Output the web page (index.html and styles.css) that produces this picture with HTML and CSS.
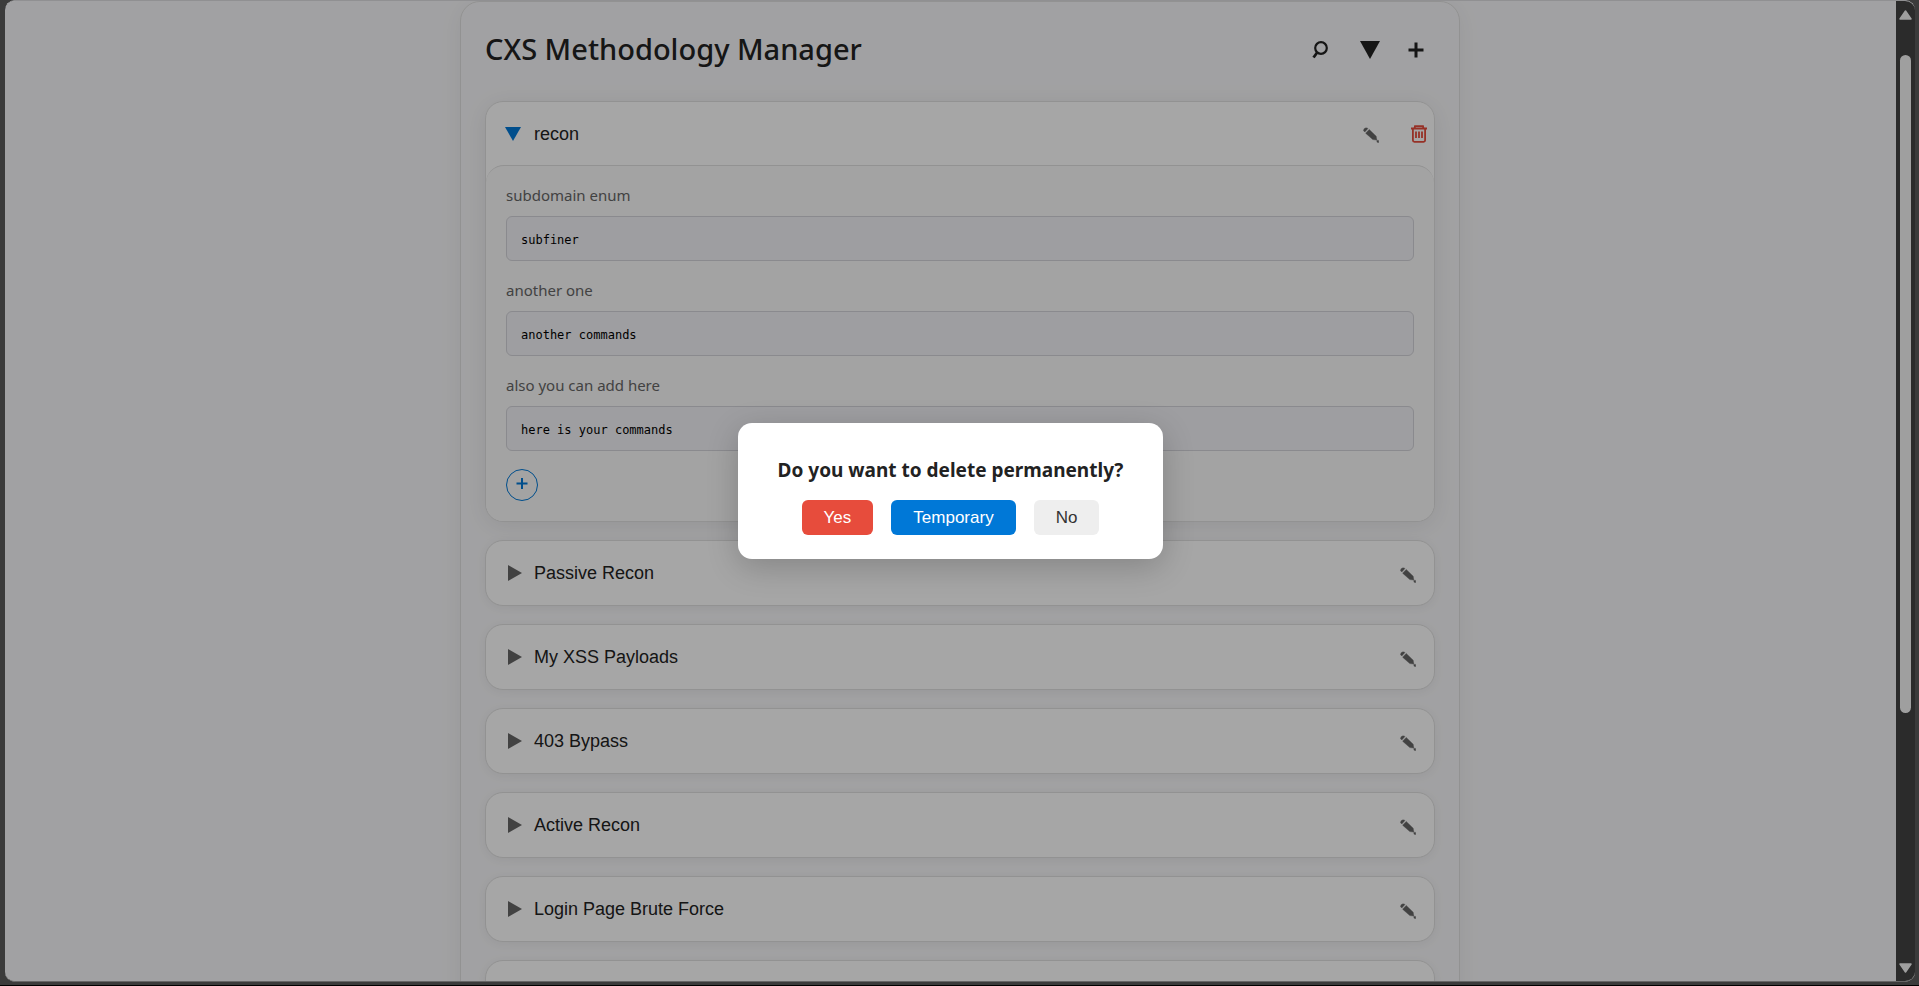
FILE: index.html
```html
<!DOCTYPE html>
<html lang="en">
<head>
<meta charset="utf-8">
<title>CXS Methodology Manager</title>
<link rel="stylesheet" href="styles.css">
</head>
<body>
<svg class="sprite" aria-hidden="true">
  <symbol id="pencil" viewBox="0 0 16 16"><path d="M.4 3.600Q.6 1.200 3 .8L5 1.400 1.800 5zM2.600 6.200 6.200 2.400l7 6.800.6 3.900-4-.5zM13.800 13.400l1.800 0 .2 2.200-1.800-.4z" fill="currentColor" stroke="currentColor" stroke-width=".4"/></symbol>
  <symbol id="right" viewBox="0 0 16 16"><path d="M2 0 16 8 2 16z" fill="currentColor"/></symbol>
  <symbol id="down" viewBox="0 0 16 14"><path d="M0 0h16L8 14z" fill="currentColor"/></symbol>
  <symbol id="plus" viewBox="0 0 16 16"><path d="M8 .5v15M.5 8h15" fill="none" stroke="currentColor" stroke-width="3"/></symbol>
</svg>
<div class="window">
  <div class="viewport">
    <main class="manager">
      <header class="top">
        <h1>CXS Methodology Manager</h1>
        <div class="tools">
          <button class="tool" type="button" aria-label="Search"><svg width="16" height="18" viewBox="0 0 16 18"><circle cx="9" cy="7" r="5.800" fill="none" stroke="currentColor" stroke-width="2.200"/><path d="M5.200 11.500 1.500 16.500" stroke="currentColor" stroke-width="2.800"/></svg></button>
          <button class="tool tool-filter" type="button" aria-label="Filter"><svg width="20" height="18" viewBox="0 0 20 18"><path d="M0 0h20L10 18z" fill="currentColor"/></svg></button>
          <button class="tool" type="button" aria-label="Add"><svg width="16" height="16"><use href="#plus"/></svg></button>
        </div>
      </header>
      <div class="list">
        <section class="card card-open">
          <div class="card-head">
            <button class="toggle" type="button" aria-expanded="true"><svg class="arrow" width="16" height="14"><use href="#down"/></svg>recon</button>
            <div class="actions">
              <button class="icon" type="button" aria-label="Edit recon"><svg width="16" height="16"><use href="#pencil"/></svg></button>
              <button class="icon icon-delete" type="button" aria-label="Delete recon"><svg width="16" height="18" viewBox="0 0 16 18" fill="none" stroke="currentColor" stroke-width="1.800"><path d="M0 3.500h16M3.500 3.500 4 1.200h8l.5 2.300M1.900 4v11.300q0 1.500 1.500 1.500h9.200q1.500 0 1.500-1.500V4M5 6.500v6.500M8 6.500v6.500M11 6.500v6.500"/></svg></button>
            </div>
          </div>
          <div class="card-body">
            <div class="entry"><p>subdomain enum</p><pre>subfiner</pre></div>
            <div class="entry"><p>another one</p><pre>another commands</pre></div>
            <div class="entry"><p>also you can add here</p><pre>here is your commands</pre></div>
            <button class="add" type="button" aria-label="Add command"><svg width="12" height="12" viewBox="0 0 12 12"><path d="M6 0v11M.5 5.500h11" stroke="currentColor" stroke-width="2"/></svg></button>
          </div>
        </section>
        <section class="card"><div class="card-head"><button class="toggle" type="button"><svg class="arrow" width="16" height="16"><use href="#right"/></svg>Passive Recon</button><div class="actions"><button class="icon" type="button" aria-label="Edit Passive Recon"><svg width="16" height="16"><use href="#pencil"/></svg></button></div></div></section>
        <section class="card"><div class="card-head"><button class="toggle" type="button"><svg class="arrow" width="16" height="16"><use href="#right"/></svg>My XSS Payloads</button><div class="actions"><button class="icon" type="button" aria-label="Edit My XSS Payloads"><svg width="16" height="16"><use href="#pencil"/></svg></button></div></div></section>
        <section class="card"><div class="card-head"><button class="toggle" type="button"><svg class="arrow" width="16" height="16"><use href="#right"/></svg>403 Bypass</button><div class="actions"><button class="icon" type="button" aria-label="Edit 403 Bypass"><svg width="16" height="16"><use href="#pencil"/></svg></button></div></div></section>
        <section class="card"><div class="card-head"><button class="toggle" type="button"><svg class="arrow" width="16" height="16"><use href="#right"/></svg>Active Recon</button><div class="actions"><button class="icon" type="button" aria-label="Edit Active Recon"><svg width="16" height="16"><use href="#pencil"/></svg></button></div></div></section>
        <section class="card"><div class="card-head"><button class="toggle" type="button"><svg class="arrow" width="16" height="16"><use href="#right"/></svg>Login Page Brute Force</button><div class="actions"><button class="icon" type="button" aria-label="Edit Login Page Brute Force"><svg width="16" height="16"><use href="#pencil"/></svg></button></div></div></section>
        <section class="card"><div class="card-head"></div></section>
      </div>
    </main>
    <div class="overlay">
      <div class="dialog" role="dialog" aria-modal="true" aria-labelledby="question">
        <h2 id="question">Do you want to delete permanently?</h2>
        <div class="choices">
          <button class="choice choice-yes" type="button">Yes</button>
          <button class="choice choice-temp" type="button">Temporary</button>
          <button class="choice choice-no" type="button">No</button>
        </div>
      </div>
    </div>
    <div class="scrollbar" aria-hidden="true">
      <svg width="13" height="10" viewBox="0 0 13 10"><path d="M6.500 1 12 9H1z" fill="currentColor" stroke="currentColor" stroke-width="1.500" stroke-linejoin="round"/></svg>
      <div class="track"><div class="thumb"></div></div>
      <svg width="13" height="10" viewBox="0 0 13 10"><path d="M6.500 9 12 1H1z" fill="currentColor" stroke="currentColor" stroke-width="1.500" stroke-linejoin="round"/></svg>
    </div>
  </div>
</div>
</body>
</html>
```
FILE: styles.css
```css
* { box-sizing: border-box; }

body {
  margin: 0;
  background: #3b3b3b;
  color: #222;
  font-family: "Segoe UI", "Noto Sans", sans-serif;
}

h1, h2, p, pre { margin: 0; }

button {
  padding: 0;
  border: 0;
  background: none;
  color: inherit;
  font-family: Arial, "Liberation Sans", sans-serif;
  cursor: pointer;
}

svg { display: block; }

.sprite { position: absolute; width: 0; height: 0; }

.window {
  height: 100vh;
  padding: 0 4px 3px 5px;
  border-bottom: 1px solid #000;
}

.viewport {
  position: relative;
  height: 100%;
  overflow: hidden;
  border-top: 1px solid #909092;
  border-bottom: 1px solid #666;
  border-radius: 10px;
  background: #f8f8fa;
}

.manager {
  max-width: 1000px;
  margin: 0 auto;
  padding: 22px 24px;
  border: 1px solid #e0e0e0;
  border-radius: 20px;
  background: #f8f8fa;
  box-shadow: 0 4px 24px rgba(0, 0, 0, 0.06);
}

.top {
  display: flex;
  align-items: center;
  justify-content: space-between;
  height: 50px;
  margin-bottom: 27px;
}

.top h1 {
  font-size: 29px;
  font-weight: 500;
  line-height: 48px;
}

.tools {
  display: flex;
  align-items: center;
  gap: 26px;
  padding: 2px 9px 0 0;
}

.tool {
  display: grid;
  place-items: center;
  width: 20px;
  height: 24px;
}

.tool-filter { margin-left: 4px; }

.list {
  display: flex;
  flex-direction: column;
  gap: 18px;
}

.card {
  border: 1px solid #e0e0e0;
  border-radius: 18px;
  background: #fff;
  box-shadow: 0 2px 12px rgba(0, 0, 0, 0.06);
}

.card-open { box-shadow: 0 4px 24px rgba(0, 0, 0, 0.08); }

.card-head {
  display: flex;
  align-items: center;
  height: 64px;
  padding: 0 14px 0 20px;
}

.card-open .card-head {
  height: 63px;
  padding: 0 3px 0 19px;
}

.card-open .toggle { gap: 13px; }

.toggle {
  display: flex;
  flex: 1;
  align-items: center;
  gap: 12px;
  font-size: 18px;
  line-height: 24px;
  text-align: left;
}

.arrow { color: #666; }

.card-open .arrow { color: #0078d7; }

.actions {
  display: flex;
  gap: 24px;
}

.icon {
  display: grid;
  place-items: center;
  width: 24px;
  height: 24px;
  padding-top: 3px;
  color: #666;
}

.icon-delete {
  padding-top: 0;
  color: #e74c3c;
}

.card-body {
  padding: 17px 20px 20px;
  border-top: 1px solid #e0e0e0;
  border-radius: 18px;
  background: #fafafa;
}

.entry { margin-bottom: 18px; }

.entry p {
  padding-bottom: 9px;
  color: #666;
  font-size: 15px;
  line-height: 24px;
}

.entry + .entry { margin-top: -1px; }

.entry pre {
  padding: 15px 14px 11px;
  border: 1px solid #d4d4da;
  border-radius: 6px;
  background: #f3f3f7;
  color: #000;
  font-family: Consolas, "DejaVu Sans Mono", monospace;
  font-size: 12px;
  line-height: 17px;
}

.add {
  display: grid;
  place-items: center;
  width: 32px;
  height: 32px;
  padding-bottom: 3px;
  border: 1px solid #0078d7;
  border-radius: 50%;
  color: #0078d7;
}

.overlay {
  position: absolute;
  inset: 0;
  display: grid;
  place-items: center;
  padding-right: 19px;
  background: rgba(0, 0, 0, 0.35);
}

.dialog {
  padding: 33px 40px 24px;
  border-radius: 14px;
  background: #fff;
  box-shadow: 0 8px 32px rgba(0, 0, 0, 0.2);
}

.dialog h2 {
  margin-bottom: 16px;
  font-size: 19px;
  line-height: 28px;
  text-align: center;
}

.choices {
  display: flex;
  justify-content: center;
  gap: 18px;
}

.choice {
  height: 35px;
  padding: 0 22px;
  border-radius: 6px;
  color: #fff;
  font-size: 17px;
}

.choice-yes { background: #e74c3c; }
.choice-temp { background: #0078d7; }
.choice-no { background: #eee; color: #333; }

.scrollbar {
  position: absolute;
  top: 0;
  right: 0;
  bottom: 0;
  display: flex;
  flex-direction: column;
  align-items: center;
  width: 19px;
  padding: 9px 0 8px;
  background: #2b2b2b;
  color: #9f9f9f;
}

.track {
  flex: 1;
  width: 11px;
  padding: 35px 0 0;
}

.thumb {
  height: 72.5%;
  border-radius: 6px;
  background: #9f9f9f;
}
```
